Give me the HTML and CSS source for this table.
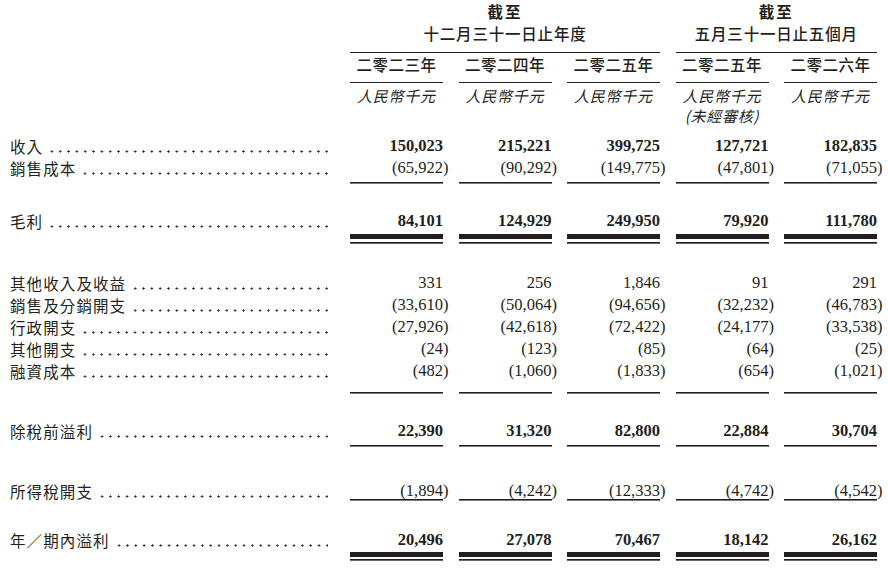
FILE: index.html
```html
<!DOCTYPE html>
<html lang="zh-Hant">
<head>
<meta charset="utf-8">
<title>財務資料概要</title>
<link rel="stylesheet" href="styles.css">
</head>
<body>
<div class="sheet">
  <div class="row hgroups">
    <div></div>
    <div class="grp g1"><div class="strong">截至</div><div>十二月三十一日止年度</div></div>
    <div class="grp g2"><div class="strong">截至</div><div>五月三十一日止五個月</div></div>
  </div>
  <div class="row hyears">
    <div></div>
    <div class="yr">二零二三年</div>
    <div class="yr">二零二四年</div>
    <div class="yr">二零二五年</div>
    <div class="yr">二零二五年</div>
    <div class="yr">二零二六年</div>
  </div>
  <div class="row hcur">
    <div></div>
    <div class="cur">人民幣千元</div>
    <div class="cur">人民幣千元</div>
    <div class="cur">人民幣千元</div>
    <div class="cur">人民幣千元<br>(未經審核)</div>
    <div class="cur">人民幣千元</div>
  </div>

  <div class="row r-rev bold">
    <div class="lbl"><span class="t">收入</span><span class="dots"></span></div>
    <div class="num">150,023</div>
    <div class="num">215,221</div>
    <div class="num">399,725</div>
    <div class="num">127,721</div>
    <div class="num">182,835</div>
  </div>
  <div class="row r-cos ul">
    <div class="lbl"><span class="t">銷售成本</span><span class="dots"></span></div>
    <div class="num">(65,922<span class="cp">)</span></div>
    <div class="num">(90,292<span class="cp">)</span></div>
    <div class="num">(149,775<span class="cp">)</span></div>
    <div class="num">(47,801<span class="cp">)</span></div>
    <div class="num">(71,055<span class="cp">)</span></div>
  </div>
  <div class="row r-gp dbl bold">
    <div class="lbl"><span class="t">毛利</span><span class="dots"></span></div>
    <div class="num">84,101</div>
    <div class="num">124,929</div>
    <div class="num">249,950</div>
    <div class="num">79,920</div>
    <div class="num">111,780</div>
  </div>

  <div class="row r-oth">
    <div class="lbl"><span class="t">其他收入及收益</span><span class="dots"></span></div>
    <div class="num">331</div>
    <div class="num">256</div>
    <div class="num">1,846</div>
    <div class="num">91</div>
    <div class="num">291</div>
  </div>
  <div class="row r-mid">
    <div class="lbl"><span class="t">銷售及分銷開支</span><span class="dots"></span></div>
    <div class="num">(33,610<span class="cp">)</span></div>
    <div class="num">(50,064<span class="cp">)</span></div>
    <div class="num">(94,656<span class="cp">)</span></div>
    <div class="num">(32,232<span class="cp">)</span></div>
    <div class="num">(46,783<span class="cp">)</span></div>
  </div>
  <div class="row r-mid">
    <div class="lbl"><span class="t">行政開支</span><span class="dots"></span></div>
    <div class="num">(27,926<span class="cp">)</span></div>
    <div class="num">(42,618<span class="cp">)</span></div>
    <div class="num">(72,422<span class="cp">)</span></div>
    <div class="num">(24,177<span class="cp">)</span></div>
    <div class="num">(33,538<span class="cp">)</span></div>
  </div>
  <div class="row r-mid">
    <div class="lbl"><span class="t">其他開支</span><span class="dots"></span></div>
    <div class="num">(24<span class="cp">)</span></div>
    <div class="num">(123<span class="cp">)</span></div>
    <div class="num">(85<span class="cp">)</span></div>
    <div class="num">(64<span class="cp">)</span></div>
    <div class="num">(25<span class="cp">)</span></div>
  </div>
  <div class="row r-fin ul">
    <div class="lbl"><span class="t">融資成本</span><span class="dots"></span></div>
    <div class="num">(482<span class="cp">)</span></div>
    <div class="num">(1,060<span class="cp">)</span></div>
    <div class="num">(1,833<span class="cp">)</span></div>
    <div class="num">(654<span class="cp">)</span></div>
    <div class="num">(1,021<span class="cp">)</span></div>
  </div>

  <div class="row r-pbt ul bold">
    <div class="lbl"><span class="t">除稅前溢利</span><span class="dots"></span></div>
    <div class="num">22,390</div>
    <div class="num">31,320</div>
    <div class="num">82,800</div>
    <div class="num">22,884</div>
    <div class="num">30,704</div>
  </div>

  <div class="row r-tax ul">
    <div class="lbl"><span class="t">所得稅開支</span><span class="dots"></span></div>
    <div class="num">(1,894<span class="cp">)</span></div>
    <div class="num">(4,242<span class="cp">)</span></div>
    <div class="num">(12,333<span class="cp">)</span></div>
    <div class="num">(4,742<span class="cp">)</span></div>
    <div class="num">(4,542<span class="cp">)</span></div>
  </div>

  <div class="row r-np dbl bold">
    <div class="lbl"><span class="t">年／期內溢利</span><span class="dots"></span></div>
    <div class="num">20,496</div>
    <div class="num">27,078</div>
    <div class="num">70,467</div>
    <div class="num">18,142</div>
    <div class="num">26,162</div>
  </div>
</div>
</body>
</html>
```

FILE: styles.css
```css
:root {
  --ink: #231f20;
}

html, body {
  margin: 0;
  padding: 0;
  background: #ffffff;
}

body {
  color: var(--ink);
  font-family: "Noto Sans CJK TC", "Noto Sans CJK SC", sans-serif;
}

.sheet {
  width: 888px;
}

.row {
  display: grid;
  grid-template-columns: 334.5px repeat(5, 93px);
  column-gap: 15.5px;
}

/* ---------- header ---------- */
.grp {
  text-align: center;
  font-size: 15.5px;
  font-weight: 500;
  letter-spacing: 0.8px;
  line-height: 22px;
  padding-bottom: 8px;
  border-bottom: 1.6px solid var(--ink);
}
.grp .strong {
  font-weight: 700;
  letter-spacing: 2px;
}
.g1 { grid-column: 2 / span 3; }
.g2 { grid-column: 5 / span 2; }

.yr {
  text-align: center;
  font-size: 15.5px;
  font-weight: 500;
  letter-spacing: 0.5px;
  line-height: 22px;
  padding-top: 0.4px;
  padding-bottom: 6.4px;
  border-bottom: 1.6px solid var(--ink);
}

.hcur {
  padding-top: 3px;
}
.cur {
  text-align: center;
  font-size: 15px;
  font-style: italic;
  letter-spacing: 0.75px;
  line-height: 20px;
}

/* ---------- body rows ---------- */
.lbl {
  display: flex;
  padding-left: 10px;
  padding-right: 6.5px;
  font-size: 15.5px;
  letter-spacing: 1.1px;
  line-height: 22px;
}
.lbl .t {
  white-space: nowrap;
}
.lbl .dots {
  flex: 1;
  height: 22px;
  margin-left: 5px;
  background-image: radial-gradient(circle at 50% 16.5px, #3c3a3a 0.95px, rgba(255,255,255,0) 1.35px);
  background-size: 8.33px 22px;
  background-repeat: repeat-x;
  background-position: right -3.1px top 0;
}

.num {
  text-align: right;
  font-family: "Liberation Serif", "Times New Roman", serif;
  font-size: 16.5px;
  line-height: 22px;
  white-space: nowrap;
}
.bold .num {
  font-weight: 700;
}
.cp {
  margin-right: -0.333em;
}

.ul .num {
  background-image: linear-gradient(var(--ink), var(--ink));
  background-repeat: no-repeat;
  background-size: 100% 1.6px;
  background-position: 0 var(--uy);
}
.dbl .num {
  background-image: linear-gradient(var(--ink), var(--ink)), linear-gradient(var(--ink), var(--ink));
  background-repeat: no-repeat, no-repeat;
  background-size: 100% 5px, 100% 1.7px;
  background-position: 0 var(--t1), 0 var(--t2);
}

.r-rev { margin-top: 9px; height: 22px; }
.r-cos { height: 27.5px; --uy: 25.5px; }
.r-gp  { margin-top: 25.7px; height: 35px; --t1: 24.5px; --t2: 32.5px; }
.r-oth { margin-top: 26.8px; height: 22px; }
.r-mid { height: 22px; }
.r-fin { height: 35px; --uy: 32.5px; }
.r-pbt { margin-top: 25.5px; height: 27px; --uy: 25px; }
.r-tax { margin-top: 32.5px; height: 21px; --uy: 19px; }
.r-np  { margin-top: 28px; height: 33px; --t1: 23px; --t2: 30.5px; }
```
